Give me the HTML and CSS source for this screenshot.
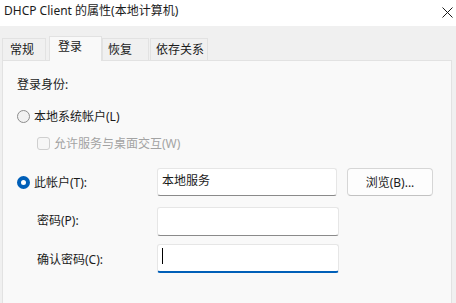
FILE: index.html
```html
<!DOCTYPE html>
<html lang="zh-CN">
<head>
	<meta charset="UTF-8">
	<title>DHCP Client 的属性(本地计算机)</title>
	<link rel="stylesheet" href="styles.css">
</head>
<body>

<div class="window">
	<div class="titleBar">
		<span class="titleText">DHCP Client 的属性(本地计算机)</span>
		<span class="closeBtn">
			<svg width="11" height="11" viewBox="0 0 11 11"><path d="M0.5 0.5 L10.5 10.5 M10.5 0.5 L0.5 10.5" stroke="#1a1a1a" stroke-width="1"/></svg>
		</span>
	</div>

	<div class="tabStrip">
		<div class="tab tabA">常规</div>
		<div class="tab tabOn">登录</div>
		<div class="tab tabC">恢复</div>
		<div class="tab tabD">依存关系</div>
	</div>

	<div class="panel">
		<div class="heading">登录身份:</div>

		<div class="optRow">
			<span class="radio"></span>
			<span>本地系统帐户(L)</span>
		</div>

		<div class="optRow subRow disabled">
			<span class="checkBox"></span>
			<span>允许服务与桌面交互(W)</span>
		</div>

		<div class="accountGrid">
			<div class="optRow">
				<span class="radio radioOn"></span>
				<span>此帐户(T):</span>
			</div>
			<div class="inputBox first"><span class="inputText">本地服务</span></div>
			<div class="browseBtn">浏览(B)...</div>

			<div class="fieldLabel">密码(P):</div>
			<div class="inputBox second"></div>
			<div></div>

			<div class="fieldLabel">确认密码(C):</div>
			<div class="inputBox third focused"><span class="caret"></span></div>
			<div></div>
		</div>
	</div>
</div>

</body>
</html>
```

FILE: styles.css
```css
*{
	margin: 0;
	padding: 0;
	box-sizing: border-box;
}

body{
	width: 456px;
	height: 303px;
	overflow: hidden;
	background: #f0f0f0;
	font-family: "Noto Sans", "Noto Sans CJK SC", sans-serif;
	font-size: 12px;
	color: #1b1b1b;
}

/* 제목줄 */
.titleBar{
	height: 26px;
	background: #ffffff;
	display: flex;
	align-items: center;
	justify-content: space-between;
	padding: 0 3px 4px 4px;
}

.titleText{
	line-height: 16px;
}

.closeBtn{
	display: flex;
	margin-top: 2px;
}

/* 탭 */
.tabStrip{
	height: 34px;
	display: flex;
	align-items: flex-end;
	padding-left: 2px;
}

.tab{
	height: 22px;
	line-height: 20px;
	border: 1px solid #e2e2e2;
	border-bottom: none;
	background: #f0f0f0;
	padding-top: 1px;
}

.tabA{
	width: 44px;
	padding-left: 7px;
}

.tabOn{
	width: 53px;
	height: 25px;
	padding-left: 8px;
	padding-top: 0;
	background: #f9f9f9;
	margin-left: 3px;
	position: relative;
	top: 1px;
	z-index: 2;
}

.tabC{
	width: 47px;
	padding-left: 5px;
}

.tabD{
	width: 58px;
	padding-left: 5px;
	margin-left: 1px;
}

/* 본문 */
.panel{
	height: 243px;
	margin: 0 4px 0 2px;
	background: #f9f9f9;
	border: 1px solid #e2e2e2;
	border-bottom: none;
	padding: 16px 0 0 14px;
	position: relative;
	z-index: 1;
}

.heading{
	line-height: 16px;
}

.optRow{
	display: flex;
	align-items: center;
	height: 20px;
	gap: 4px;
}

.optRow:nth-child(2){
	margin-top: 13px;
}

.subRow{
	margin-top: 7px;
	padding-left: 20px;
}

.disabled{
	color: #a3a3a3;
}

.radio{
	width: 13px;
	height: 13px;
	border-radius: 50%;
	border: 1px solid #8d8d8d;
	background: #f2f2f2;
	flex: none;
}

.radioOn{
	border: 4px solid #005fb8;
	background: #ffffff;
}

.checkBox{
	width: 13px;
	height: 13px;
	border-radius: 3px;
	border: 1px solid #cfcfcf;
	background: #f6f6f6;
	flex: none;
}

.accountGrid{
	margin-top: 15px;
	display: grid;
	grid-template-columns: 140px 182px 94px;
	grid-template-rows: 28px 29px 29px;
	row-gap: 10px;
	align-items: center;
}

.fieldLabel{
	padding-left: 20px;
	line-height: 16px;
}

.inputBox{
	height: 100%;
	background: #ffffff;
	border: 1px solid #e6e6e6;
	border-bottom: 1px solid #8a8a8a;
	border-radius: 3px;
	padding: 3px 0 0 4px;
}

.first{
	width: 180px;
}

.second{
	margin-top: 1px;
}

.third{
	margin-top: -2px;
}

.inputText{
	line-height: 16px;
}

.focused{
	border-bottom: 2px solid #005fb8;
}

.caret{
	display: block;
	width: 1px;
	height: 16px;
	background: #000000;
}

.browseBtn{
	justify-self: end;
	width: 86px;
	height: 28px;
	background: #fdfdfd;
	border: 1px solid #d6d6d6;
	border-bottom-color: #c2c2c2;
	border-radius: 4px;
	display: flex;
	align-items: center;
	justify-content: center;
}
```
